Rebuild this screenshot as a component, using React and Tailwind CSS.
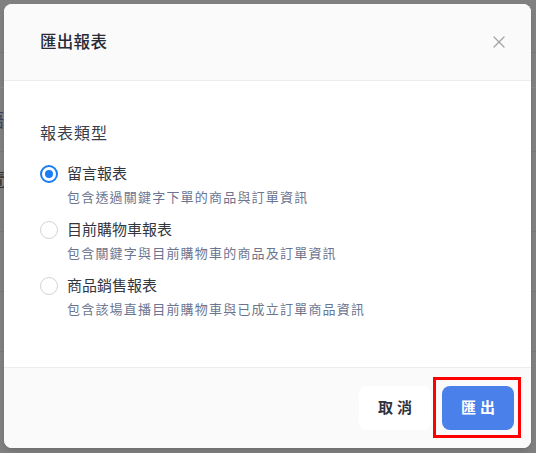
import { X } from 'lucide-react'

const options = [
  { label: '留言報表', desc: '包含透過關鍵字下單的商品與訂單資訊', checked: true },
  { label: '目前購物車報表', desc: '包含關鍵字與目前購物車的商品及訂單資訊' },
  { label: '商品銷售報表', desc: '包含該場直播目前購物車與已成立訂單商品資訊' },
]

const App = () => {
  return (
    <div
      className="relative w-[536px] h-[453px] overflow-hidden bg-[#808080]"
      style={{ fontFamily: '"Noto Sans CJK TC", "Noto Sans", sans-serif' }}
    >
      {/* dimmed page behind the dialog */}
      <div className="absolute inset-0 flex flex-col text-[#3b4260] text-[18px] leading-none">
        <div className="h-[53px] border-b border-[#777]" />
        <div className="h-[35px] border-b border-[#888]" />
        <div className="h-[64px] border-b border-[#777] pt-[22px]">
          <span className="-ml-[14px]">語</span>
        </div>
        <div className="h-[80px] border-b border-[#777] pt-[18px]">
          <span className="-ml-[13px] text-[#333]">覽</span>
        </div>
        <div className="h-[60px] border-b border-[#777]" />
        <div className="h-[60px] border-b border-[#777]" />
      </div>

      {/* dialog */}
      <div className="absolute left-[4px] top-[4px] w-[527px] h-[444px] rounded-lg bg-white flex flex-col overflow-hidden shadow-md">
        <div className="h-[77px] shrink-0 bg-[#fafafa] border-b border-[#ececec] flex items-center justify-between pl-[36px] pr-[22px]">
          <h2 className="text-[16.5px] font-medium text-[#282b38] tracking-[0.3px] -mt-[1px]">匯出報表</h2>
          <X className="h-[20px] w-[20px] text-[#a3a3a3]" strokeWidth={1.5} />
        </div>

        <div className="flex-1 pl-[36px] pt-[39px]">
          <p className="text-[16px] text-[#3a3d4a] leading-[24px] tracking-[1px]">報表類型</p>
          <div className="mt-[17px] flex flex-col gap-[9px]">
            {options.map((o) => (
              <div key={o.label} className="flex gap-[9px]">
                <span
                  className={`mt-[4px] h-[18px] w-[18px] shrink-0 rounded-full border flex items-center justify-center ${
                    o.checked ? 'border-[#1a7cf4] border-[2px]' : 'border-[#d4d4d8]'
                  }`}
                >
                  {o.checked && <span className="h-[8px] w-[8px] rounded-full bg-[#1a7cf4]" />}
                </span>
                <div>
                  <p className="text-[15px] leading-[24px] text-[#33363f]">{o.label}</p>
                  <p className="mt-[1px] text-[13px] leading-[22px] text-[#6b7590] tracking-[1.2px]">{o.desc}</p>
                </div>
              </div>
            ))}
          </div>
        </div>

        <div className="h-[81px] shrink-0 bg-[#fafafa] border-t border-[#ececec] flex items-center justify-end gap-[11px] pr-[17px] pb-[1px]">
          <button className="h-[44px] w-[72px] rounded-lg bg-white text-[15px] font-bold text-[#2e3140] tracking-[4px] pl-[4px]">
            取消
          </button>
          <div className="relative">
            <button className="h-[44px] w-[72px] rounded-lg bg-[#4a80ea] text-[15px] font-bold text-white tracking-[4px] pl-[4px]">
              匯出
            </button>
            {/* highlight box */}
            <div className="absolute -left-[9px] -top-[9px] w-[88px] h-[61px] border-[3px] border-[#ff0000] pointer-events-none" />
          </div>
        </div>
      </div>
    </div>
  )
}

export default App
